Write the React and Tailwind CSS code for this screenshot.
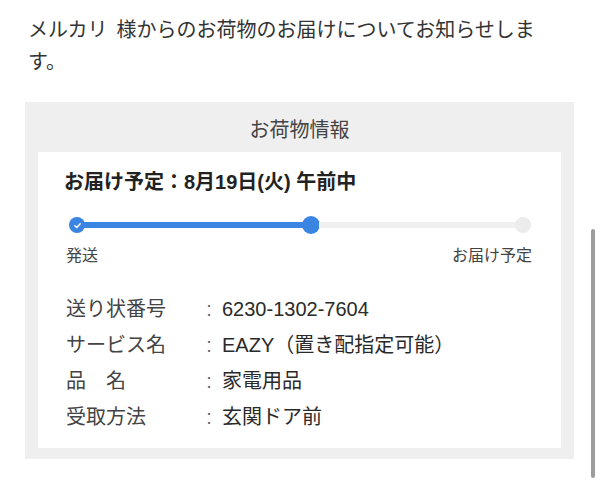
import React from "react";

const font = { };

function Row({ label, value }) {
  return (
    <div className="flex items-center h-[36px] text-[20px] leading-[36px]">
      <div className="w-[136px] text-[#444444] whitespace-pre">{label}</div>
      <div className="w-[14px] text-center text-[#666666]">:</div>
      <div className="ml-[6px] text-[#2a2a2a]">{value}</div>
    </div>
  );
}

export default function App() {
  return (
    <div className="relative w-[600px] h-[488px] bg-white overflow-hidden font-['Liberation_Sans','Noto_Sans_CJK_JP',sans-serif]">
      <p className="pl-[28px] pt-[14px] text-[20px] leading-[32px] text-[#333333] whitespace-nowrap">
        メルカリ<span className="inline-block w-[9px]"></span>様からのお荷物のお届けについてお知らせしま
        <br />
        す。
      </p>

      <div className="mt-[24px] ml-[25px] w-[549px] bg-[#efefef] pb-[11px]">
        <div className="h-[50px] flex items-center justify-center pt-[6px] text-[20px] text-[#444444]">
          お荷物情報
        </div>
        <div className="mx-[13px] h-[296px] bg-white px-[28px] pt-[16px]">
          <div className="text-[20px] leading-[28px] font-bold text-[#222222] -ml-[2px]">
            お届け予定：8月19日(火) 午前中
          </div>

          <div className="mt-[20px] ml-[3px] w-[462px] h-[18px] flex items-center">
            <div className="w-[16px] h-[16px] rounded-full bg-[#3a84e2] flex items-center justify-center shrink-0">
              <svg width="9" height="9" viewBox="0 0 10 10" fill="none">
                <path d="M2 5.2 L4.2 7.2 L8 3" stroke="white" strokeWidth="1.6" strokeLinecap="round" strokeLinejoin="round" />
              </svg>
            </div>
            <div className="w-[219px] h-[6px] bg-[#3a84e2] -mx-px shrink-0"></div>
            <div className="w-[18px] h-[18px] rounded-full bg-[#3a84e2] shrink-0"></div>
            <div className="flex-1 h-[6px] bg-[#f0f0f0] -mx-px"></div>
            <div className="w-[16px] h-[16px] rounded-full bg-[#ececec] shrink-0"></div>
          </div>

          <div className="mt-[11px] flex justify-between text-[16px] leading-[22px] text-[#444444] pr-[1px]">
            <span>発送</span>
            <span>お届け予定</span>
          </div>

          <div className="mt-[24px]">
            <Row label="送り状番号" value="6230-1302-7604" />
            <Row label="サービス名" value="EAZY（置き配指定可能）" />
            <Row label="品　名" value="家電用品" />
            <Row label="受取方法" value="玄関ドア前" />
          </div>
        </div>
      </div>

      <div className="absolute left-[591px] top-[229px] w-[4px] h-[249px] rounded-full bg-[#9c9c9c]"></div>
    </div>
  );
}
